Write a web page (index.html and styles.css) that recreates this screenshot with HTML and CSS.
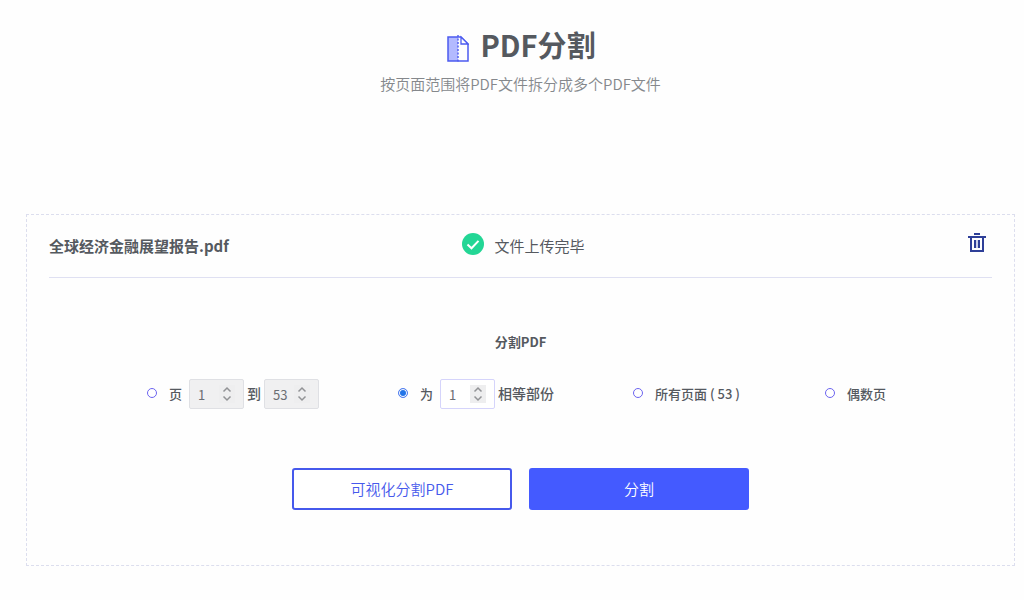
FILE: index.html
```html
<!DOCTYPE html>
<html lang="zh-CN">
<head>
<meta charset="utf-8">
<meta name="viewport" content="width=device-width, initial-scale=1">
<title>PDF分割</title>
<link rel="stylesheet" href="styles.css">
</head>
<body>
<main class="page">
  <header class="intro">
    <h1 class="title">
      <svg class="title-icon" width="22" height="28" viewBox="0 0 22 28" fill="none" aria-hidden="true">
        <path d="M1 2h10v24H1z" fill="#b3baff"/>
        <path d="M11 2H1v24h20V9l-7-7h-3" stroke="#4c5bf0" stroke-width="1.5"/>
        <path d="M14 2v7h7z" fill="#fff" stroke="#4c5bf0" stroke-width="1.3"/>
        <path d="M11 0v28" stroke="#4c5bf0" stroke-width="1.4" stroke-dasharray="2 1.5"/>
      </svg>
      <span>PDF分割</span>
    </h1>
    <p class="subtitle">按页面范围将PDF文件拆分成多个PDF文件</p>
  </header>

  <form class="card">
    <div class="file">
      <strong class="file-name">全球经济金融展望报告.pdf</strong>
      <div class="file-status">
        <svg class="check" width="22" height="22" viewBox="0 0 22 22" fill="none" aria-hidden="true">
          <circle cx="11" cy="11" r="11" fill="#23d695"/>
          <path d="M5.5 11.500l4 3.800 7-7.400" stroke="#fff" stroke-width="2"/>
        </svg>
        <span>文件上传完毕</span>
      </div>
      <button class="delete" type="button" aria-label="删除">
        <svg width="18" height="20" viewBox="0 0 18 20" fill="none" stroke="#2e3f98" aria-hidden="true">
          <path d="M6 1h6M0 4h18" stroke-width="2"/>
          <path d="M3 4v14h12V4" stroke-width="2"/>
          <path d="M7 7v8M11 7v8" stroke-width="2"/>
          <path d="M9 7v8" stroke="#9aa3d6" stroke-width="1"/>
        </svg>
      </button>
    </div>

    <h2 class="heading">分割PDF</h2>

    <div class="options">
      <div class="option">
        <input class="radio" type="radio" name="mode" id="mode-range">
        <label class="label" for="mode-range">页</label>
        <div class="range">
          <div class="number number-off">
            <input class="number-input" type="number" value="1" aria-label="起始页" disabled>
            <svg class="spin" width="16" height="18" viewBox="0 0 16 18" aria-hidden="true"><path d="M4.500 6.500l3.500-3.500 3.500 3.500M4.500 11.500l3.500 3.500 3.500-3.500"/></svg>
          </div>
          <span class="word">到</span>
          <div class="number number-off">
            <input class="number-input" type="number" value="53" aria-label="结束页" disabled>
            <svg class="spin" width="16" height="18" viewBox="0 0 16 18" aria-hidden="true"><path d="M4.500 6.500l3.500-3.500 3.500 3.500M4.500 11.500l3.500 3.500 3.500-3.500"/></svg>
          </div>
        </div>
      </div>
      <div class="option">
        <input class="radio" type="radio" name="mode" id="mode-parts" checked>
        <label class="label" for="mode-parts">为</label>
        <div class="range">
          <div class="number">
            <input class="number-input" type="number" value="1" aria-label="份数">
            <svg class="spin" width="16" height="18" viewBox="0 0 16 18" aria-hidden="true"><path d="M4.500 6.500l3.500-3.500 3.500 3.500M4.500 11.500l3.500 3.500 3.500-3.500"/></svg>
          </div>
          <span class="word">相等部份</span>
        </div>
      </div>
      <div class="option">
        <input class="radio" type="radio" name="mode" id="mode-all">
        <label class="label" for="mode-all">所有页面 ( 53 )</label>
      </div>
      <div class="option option-last">
        <input class="radio" type="radio" name="mode" id="mode-even">
        <label class="label" for="mode-even">偶数页</label>
      </div>
    </div>

    <div class="actions">
      <button class="button" type="button">可视化分割PDF</button>
      <button class="button button-main" type="submit">分割</button>
    </div>
  </form>
</main>
</body>
</html>
```
FILE: styles.css
```css
* {
  box-sizing: border-box;
}

body {
  margin: 0;
  background: #fefefe;
  color: #55595f;
  font-family: "Noto Sans CJK SC", "Noto Sans", sans-serif;
  font-size: 15px;
  line-height: 24px;
}

.page {
  padding: 22px 9px 32px 26px;
}

.intro {
  text-align: center;
}

.title {
  display: flex;
  justify-content: center;
  align-items: center;
  gap: 11px;
  margin: 0;
  padding-left: 2px;
  font-size: 29px;
  line-height: 44px;
}

.title-icon {
  margin-top: 10px;
}

.subtitle {
  margin: 6px 0 0;
  color: #85888c;
  font-weight: 350;
}

.card {
  margin-top: 118px;
  padding: 0 22px 55px;
  border: 1px dashed #dcdeee;
}

.file {
  display: grid;
  grid-template-columns: 1fr auto 1fr;
  align-items: center;
  height: 63px;
  border-bottom: 1px solid #dfe0f2;
}

.file-status {
  display: flex;
  align-items: center;
  gap: 10px;
  padding-left: 6px;
}

.check {
  margin-bottom: 4px;
}

.delete {
  justify-self: end;
  margin-right: 6px;
  margin-bottom: 6px;
  padding: 0;
  border: 0;
  background: none;
  line-height: 0;
}

.heading {
  margin: 52px 0 25px;
  font-size: 13px;
  line-height: 24px;
  text-align: center;
}

.options {
  display: flex;
  justify-content: space-between;
  padding: 0 106px 0 98px;
}

.option {
  display: flex;
  align-items: center;
  gap: 12px;
  height: 30px;
}

.option-last {
  margin-left: 6px;
}

.radio {
  appearance: none;
  width: 10px;
  height: 10px;
  margin: 0 0 2px;
  border: 1px solid #6c64f0;
  border-radius: 50%;
  background: #fff;
}

.radio:checked {
  border-color: #5680f0;
  background: #2375e8;
  box-shadow: inset 0 0 0 1px #fff;
}

.label {
  font-size: 13px;
  font-weight: 500;
}

.range {
  display: flex;
  align-items: center;
  gap: 3px;
  margin-left: -5px;
}

.number {
  display: flex;
  align-items: center;
  width: 55px;
  height: 30px;
  padding: 0 8px;
  border: 1px solid #d5d4fb;
  border-radius: 2px;
  background: #fff;
}

.number-off {
  border-color: #dfe0e4;
  background: #f0f0f1;
}

.number-input {
  appearance: textfield;
  flex: 1;
  min-width: 0;
  padding: 0;
  border: 0;
  background: none;
  color: #6b6e73;
  font: 13px "Noto Sans CJK SC", sans-serif;
}

.number-input::-webkit-inner-spin-button {
  appearance: none;
  margin: 0;
}

.spin {
  flex: none;
  background: #eeeeef;
  fill: none;
  stroke: #929396;
  stroke-width: 1.5;
}

.word {
  margin-bottom: 2px;
  font-size: 14px;
  font-weight: 500;
}

.actions {
  display: flex;
  justify-content: center;
  gap: 17px;
  margin-top: 59px;
}

.button {
  width: 220px;
  height: 42px;
  padding: 0 0 2px;
  border: 2px solid #4659ec;
  border-radius: 3px;
  background: #fff;
  color: #4659ec;
  font: 350 15px "Noto Sans CJK SC", sans-serif;
}

.button-main {
  border-color: #445aff;
  background: #445aff;
  color: #fff;
}
```
